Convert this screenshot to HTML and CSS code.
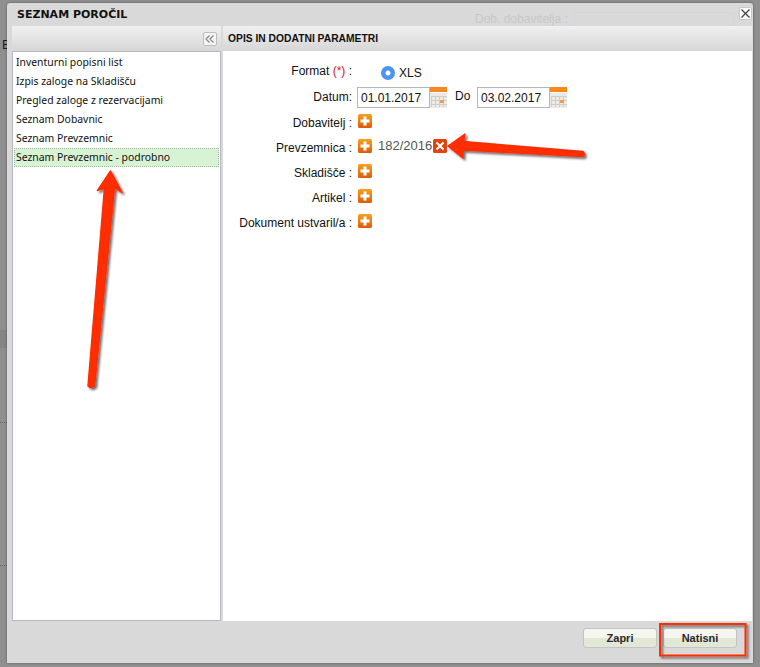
FILE: index.html
```html
<!DOCTYPE html>
<html lang="sl">
<head>
<meta charset="utf-8">
<title>Seznam poročil</title>
<link rel="stylesheet" href="styles.css">
</head>
<body>
<div class="backdrop">
  <span class="ghost-letter">E</span>
  <i class="ghost-band"></i>
  <i class="ghost-dots ghost-dots-a"></i>
  <i class="ghost-dots ghost-dots-b"></i>
</div>
<main class="dialog">
  <header class="titlebar">
    <h1 class="title">SEZNAM POROČIL</h1>
    <div class="ghost-field"><span class="ghost-text">Dob. dobavitelja :</span><i class="ghost-box"></i></div>
    <button class="close" aria-label="Zapri">
      <svg width="11" height="11" viewBox="0 0 11 11"><path d="M1.500 1.500l8 8M9.500 1.500l-8 8" stroke="#444" stroke-width="1.300" fill="none"/></svg>
    </button>
  </header>
  <div class="panels">
    <aside class="side">
      <div class="side-head">
        <button class="collapse" aria-label="Skrij">
          <svg width="10" height="8" viewBox="0 0 10 8"><path d="M4.500 .5L1 4l3.500 3.500M8.500 .5L5 4l3.500 3.500" stroke="#8a8a8a" stroke-width="1.300" fill="none"/></svg>
        </button>
      </div>
      <ul class="list">
        <li class="item">Inventurni popisni list</li>
        <li class="item">Izpis zaloge na Skladišču</li>
        <li class="item">Pregled zaloge z rezervacijami</li>
        <li class="item">Seznam Dobavnic</li>
        <li class="item">Seznam Prevzemnic</li>
        <li class="item selected">Seznam Prevzemnic - podrobno</li>
      </ul>
    </aside>
    <section class="content">
      <h2 class="content-head">OPIS IN DODATNI PARAMETRI</h2>
      <div class="form">
        <div class="label raised">Format <span class="req">(*)</span> :</div>
        <div class="value format"><i class="radio"></i><span class="xls">XLS</span></div>

        <div class="label">Datum:</div>
        <div class="value dates">
          <span class="input">01.01.2017</span>
          <svg class="cal" width="17" height="21" viewBox="0 0 17 21"><use href="#cal-icon"/></svg>
          <span class="do">Do</span>
          <span class="input">03.02.2017</span>
          <svg class="cal" width="17" height="21" viewBox="0 0 17 21"><use href="#cal-icon"/></svg>
        </div>

        <div class="label lowered">Dobavitelj :</div>
        <div class="value"><svg class="btn-ico" width="14" height="14" viewBox="0 0 14 14"><use href="#plus-icon"/></svg></div>

        <div class="label lowered">Prevzemnica :</div>
        <div class="value">
          <svg class="btn-ico" width="14" height="14" viewBox="0 0 14 14"><use href="#plus-icon"/></svg>
          <span class="chip">182/2016</span>
          <svg class="btn-ico" width="14" height="14" viewBox="0 0 14 14">
            <rect width="14" height="14" rx="1.500" fill="#e2440f"/>
            <path d="M3.500 3.500l7 7M10.500 3.500l-7 7" stroke="#fff" stroke-width="2"/>
          </svg>
        </div>

        <div class="label lowered">Skladišče :</div>
        <div class="value"><svg class="btn-ico" width="14" height="14" viewBox="0 0 14 14"><use href="#plus-icon"/></svg></div>

        <div class="label lowered">Artikel :</div>
        <div class="value"><svg class="btn-ico" width="14" height="14" viewBox="0 0 14 14"><use href="#plus-icon"/></svg></div>

        <div class="label lowered">Dokument ustvaril/a :</div>
        <div class="value"><svg class="btn-ico" width="14" height="14" viewBox="0 0 14 14"><use href="#plus-icon"/></svg></div>
      </div>
    </section>
  </div>
  <footer class="footer">
    <button class="btn">Zapri</button>
    <button class="btn">Natisni</button>
  </footer>
</main>

<svg class="annotations" width="760" height="667" viewBox="0 0 760 667" aria-hidden="true">
  <defs>
    <filter id="shade" x="-20%" y="-20%" width="140%" height="140%">
      <feDropShadow dx="2" dy="2" stdDeviation="1.200" flood-color="#000" flood-opacity=".55"/>
    </filter>
    <linearGradient id="plus-fill" x1="0" y1="0" x2="0" y2="1">
      <stop offset="0" stop-color="#f8a21e"/>
      <stop offset="1" stop-color="#dc5a0c"/>
    </linearGradient>
    <symbol id="plus-icon" viewBox="0 0 14 14">
      <rect width="14" height="14" rx="1.500" fill="url(#plus-fill)"/>
      <path d="M7 2.500v9M2.500 7h9" stroke="#fff" stroke-width="3"/>
    </symbol>
    <symbol id="cal-icon" viewBox="0 0 17 21">
      <rect width="17" height="21" fill="#eceae6"/>
      <rect width="17" height="5" fill="#f5891e"/>
      <path d="M0 5.500h17" stroke="#fff"/>
      <path d="M1 9.500h16M1 13.500h16M1 17.500h16M1.500 9v11M5.500 9v11M9.500 9v11M13.500 9v11" stroke="#cfcfcc" stroke-width="1" fill="none"/>
      <rect x="10" y="13" width="4" height="3" fill="#f59a4a"/>
    </symbol>
  </defs>
  <g fill="#ff2d00" stroke="#ff2d00" stroke-linejoin="round" filter="url(#shade)">
    <path stroke-width="1.500" d="M448 146 L465 134 L463.500 141.500 L583 151.500 Q585.500 154 583 156.500 L463 150 L463 158 Z"/>
    <path stroke-width="1.500" d="M110.500 171 L122 192.500 L114.500 187.500 L94.500 386 Q91 389 88 386 L104.500 188 L97.500 190.500 Z"/>
  </g>
  <rect x="660" y="624" width="85.500" height="31.500" fill="none" stroke="#ff2d00" stroke-width="2" filter="url(#shade)"/>
</svg>
</body>
</html>
```
FILE: styles.css
```css
* { box-sizing: border-box; }
html, body { margin: 0; height: 100%; }
body {
  width: 760px;
  height: 667px;
  overflow: hidden;
  padding: 3px 7px 4px;
  background: #8f8f8f;
  font-family: "Liberation Sans", Arial, sans-serif;
  color: #111;
  position: relative;
}
.backdrop { position: absolute; inset: 0; }
.ghost-letter { position: absolute; left: 2px; top: 37px; font-size: 13px; color: #2a1a1a; }
.ghost-band { position: absolute; left: 0; top: 330px; width: 7px; height: 18px; background: #858585; }
.ghost-dots { position: absolute; left: 0; width: 7px; border-top: 1px dotted #666; }
.ghost-dots-a { top: 422px; }
.ghost-dots-b { top: 565px; }

.dialog {
  position: relative;
  height: 660px;
  width: 746px;
  display: flex;
  flex-direction: column;
  background: #d9d9d9;
  border-radius: 3px 3px 0 0;
  box-shadow: 0 0 3px rgba(0, 0, 0, .35);
  padding: 0 1px 0 5px;
}
.titlebar { height: 23px; display: flex; align-items: center; position: relative; }
.title {
  margin: 0 0 0 5px;
  font: bold 11px "DejaVu Sans", sans-serif;
  color: #111;
}
.ghost-field { position: absolute; left: 463px; top: 9px; display: flex; gap: 6px; }
.ghost-text { font-size: 12px; color: #c8c8c8; line-height: 14px; }
.ghost-box { width: 160px; height: 14px; border: 1px solid #d5d5d5; border-bottom: 0; }
.close {
  position: absolute;
  right: 0;
  top: 4px;
  width: 13px;
  height: 13px;
  padding: 0;
  display: grid;
  place-items: center;
  background: #fff;
  border: 1px solid #c8c8c8;
  border-radius: 2px;
}
.panels { flex: 1; display: flex; gap: 2px; min-height: 0; }
.side { width: 209px; display: flex; flex-direction: column; }
.side-head {
  height: 25px;
  display: flex;
  align-items: center;
  justify-content: flex-end;
  padding-right: 4px;
  background: linear-gradient(#f1f1f1, #d6d6d6);
}
.collapse {
  width: 14px;
  height: 14px;
  padding: 0;
  display: grid;
  place-items: center;
  background: #f4f4f4;
  border: 1px solid #bdbdbd;
  border-radius: 2px;
}
.list {
  flex: 1;
  margin: 0;
  padding: 1px 1px 0;
  list-style: none;
  background: #fff;
  border: 1px solid #b8b8c6;
}
.item {
  height: 19px;
  padding-left: 2px;
  font: 10.400px/19px "Noto Sans", sans-serif;
  color: #111;
  white-space: nowrap;
}
.selected {
  width: 205px;
  padding-left: 1px;
  line-height: 16px;
  background: #d8f2d4;
  border: 1px dotted #9fbf9f;
}
.content { flex: 1; display: flex; flex-direction: column; min-width: 0; background: #fff; }
.content-head {
  height: 25px;
  margin: 0;
  padding-left: 5px;
  background: linear-gradient(#f1f1f1, #d6d6d6);
  font: bold 10.300px/25px "Liberation Sans", sans-serif;
  color: #111;
}
.form {
  display: grid;
  grid-template-columns: 129px 1fr;
  grid-auto-rows: 25px;
  column-gap: 5px;
  padding-top: 9px;
  font-size: 12px;
}
.label { text-align: right; line-height: 25px; white-space: nowrap; }
.raised { line-height: 23px; }
.lowered { line-height: 27px; }
.req { color: #e01030; }
.value { display: flex; align-items: center; }
.format { padding-left: 24px; }
.radio {
  width: 14px;
  height: 14px;
  border-radius: 50%;
  background: radial-gradient(circle closest-side, #fff 0, #fff 28%, #4d92f4 42%);
}
.xls { margin-left: 4px; font-size: 12px; }
.input {
  width: 73px;
  height: 21px;
  padding-left: 3px;
  border: 1px solid #b4b4c4;
  font-size: 12px;
  line-height: 21px;
  background: #fff;
  color: #111;
}
.do { width: 30px; padding-left: 8px; margin-top: -3px; }
.btn-ico { display: block; flex: none; margin: -4px 0 0 1px; }
.chip { margin: -4px 0 0 6px; font-size: 13px; color: #555; }
.footer {
  height: 42px;
  display: flex;
  justify-content: flex-end;
  gap: 6px;
  padding: 7px 15px 0 0;
}
.btn {
  width: 74px;
  height: 20px;
  padding: 0;
  border: 1px solid #c4c4c4;
  border-radius: 3px;
  background: linear-gradient(#f6f6f1 0 50%, #e2e8d6 50% 100%);
  font: bold 11px "Liberation Sans", sans-serif;
  color: #2a2a2a;
}
.annotations { position: absolute; left: 0; top: 0; pointer-events: none; }
```
